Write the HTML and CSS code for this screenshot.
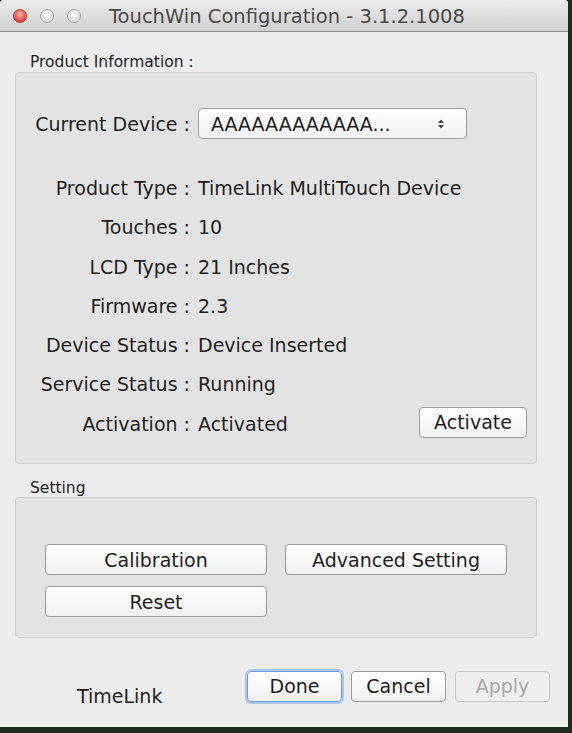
FILE: index.html
```html
<!DOCTYPE html>
<html lang="en">
<head>
    <meta charset="UTF-8">
    <title>TouchWin Configuration</title>
    <link rel="stylesheet" href="styles.css">
</head>
<body>
    <div class="window">
        <div class="titlebar">
            <div class="lights">
                <span class="light close"></span>
                <span class="light"></span>
                <span class="light"></span>
            </div>
            <div class="title">TouchWin Configuration - 3.1.2.1008</div>
        </div>

        <div class="content">
            <div class="group-label">Product Information :</div>
            <div class="box product-box">
                <div class="device-row">
                    <span class="label">Current Device :</span>
                    <div class="popup">
                        <span>AAAAAAAAAAAA...</span>
                        <svg class="updown" width="8" height="12" viewBox="0 0 8 12">
                            <path d="M1 5 L4 1.5 L7 5 Z" fill="#444"/>
                            <path d="M1 7 L4 10.5 L7 7 Z" fill="#444"/>
                        </svg>
                    </div>
                </div>

                <div class="info">
                    <span class="label">Product Type :</span><span class="value">TimeLink MultiTouch Device</span>
                    <span class="label">Touches :</span><span class="value">10</span>
                    <span class="label">LCD Type :</span><span class="value">21 Inches</span>
                    <span class="label">Firmware :</span><span class="value">2.3</span>
                    <span class="label">Device Status :</span><span class="value">Device Inserted</span>
                    <span class="label">Service Status :</span><span class="value">Running</span>
                    <span class="label">Activation :</span>
                    <span class="value activation">Activated <button class="btn activate">Activate</button></span>
                </div>
            </div>

            <div class="group-label setting-label">Setting</div>
            <div class="box setting-box">
                <div class="setting-grid">
                    <button class="btn">Calibration</button>
                    <button class="btn">Advanced Setting</button>
                    <button class="btn">Reset</button>
                </div>
            </div>

            <div class="footer">
                <span class="brand">TimeLink</span>
                <div class="actions">
                    <button class="btn action default">Done</button>
                    <button class="btn action">Cancel</button>
                    <button class="btn action disabled">Apply</button>
                </div>
            </div>
        </div>
    </div>
</body>
</html>
```

FILE: styles.css
```css
body {
    margin: 0;
    padding: 0;
    background-color: #1e2a20;
    font-family: "DejaVu Sans", Verdana, sans-serif;
    color: #1e1e1e;
}
.window {
    width: 568px;
    height: 727px;
    background-color: #ececec;
    border-radius: 4px 4px 0 0;
    overflow: hidden;
    display: flex;
    flex-direction: column;
}
.titlebar {
    height: 32px;
    box-sizing: border-box;
    border-bottom: 1px solid #8e8e8e;
    background: linear-gradient(#ececec, #cfcfcf);
    display: flex;
    align-items: center;
}
.lights {
    display: flex;
    gap: 13px;
    padding-left: 13px;
}
.light {
    width: 12px;
    height: 12px;
    border-radius: 50%;
    background: radial-gradient(circle at 50% 35%, #fafafa, #cfcfcf);
    border: 1px solid #a5a5a5;
}
.light.close {
    background: radial-gradient(circle at 50% 35%, #ffb3a8, #e0443a 70%);
    border-color: #b33a30;
}
.title {
    margin-left: 28px;
    font-size: 19.5px;
    color: #4a4a4a;
    padding-top: 2px;
}
.content {
    padding: 0 31px 0 15px;
    display: flex;
    flex-direction: column;
}
.group-label {
    font-size: 15.5px;
    line-height: 18px;
    padding: 21px 0 1px 15px;
}
.box {
    background-color: #e3e3e3;
    border: 1px solid #cdcdcd;
    border-radius: 4px;
}
.product-box {
    height: 392px;
    box-sizing: border-box;
    padding: 35px 9px 0 0;
}
.device-row {
    display: grid;
    grid-template-columns: 174px auto;
    column-gap: 8px;
    align-items: center;
}
.label {
    text-align: right;
    font-size: 19px;
    line-height: 22px;
}
.popup {
    width: 269px;
    height: 31px;
    box-sizing: border-box;
    border: 1px solid #a0a0a0;
    border-radius: 4px;
    background: linear-gradient(#ffffff, #f1f1f1);
    display: flex;
    align-items: center;
    justify-content: space-between;
    padding: 0 21px 0 12px;
    font-size: 19px;
}
.info {
    margin-top: 38px;
    display: grid;
    grid-template-columns: 174px 1fr;
    grid-auto-rows: 22px;
    column-gap: 8px;
    row-gap: 17.3px;
    align-items: center;
}
.value {
    font-size: 19px;
    line-height: 22px;
}
.activation {
    display: flex;
    justify-content: space-between;
    align-items: center;
}
.btn {
    font-family: "DejaVu Sans", Verdana, sans-serif;
    font-size: 19px;
    color: #1e1e1e;
    background: linear-gradient(#ffffff, #f0f0f0);
    border: 1px solid #9c9c9c;
    border-radius: 4px;
    height: 31px;
    padding: 0;
}
.activate {
    width: 108px;
    margin: -6px 0 -3px;
}
.setting-label {
    padding-top: 15px;
    padding-bottom: 0;
}
.setting-box {
    height: 141px;
    box-sizing: border-box;
    padding: 46px 0 0 29px;
}
.setting-grid {
    display: grid;
    grid-template-columns: 222px 222px;
    column-gap: 18px;
    row-gap: 11px;
}
.footer {
    margin-top: 27px;
    display: flex;
    align-items: center;
    justify-content: space-between;
    margin-right: -13px;
}
.brand {
    font-size: 19px;
    padding-left: 62px;
    padding-top: 20px;
}
.actions {
    display: flex;
    gap: 9px;
}
.action {
    width: 95px;
    height: 31px;
}
.default {
    border-color: #6a9ee0;
    box-shadow: 0 0 0 2px #a9c8f0;
}
.disabled {
    color: #a8a8a8;
    border-color: #c8c8c8;
    background: #eeeeee;
}
```
